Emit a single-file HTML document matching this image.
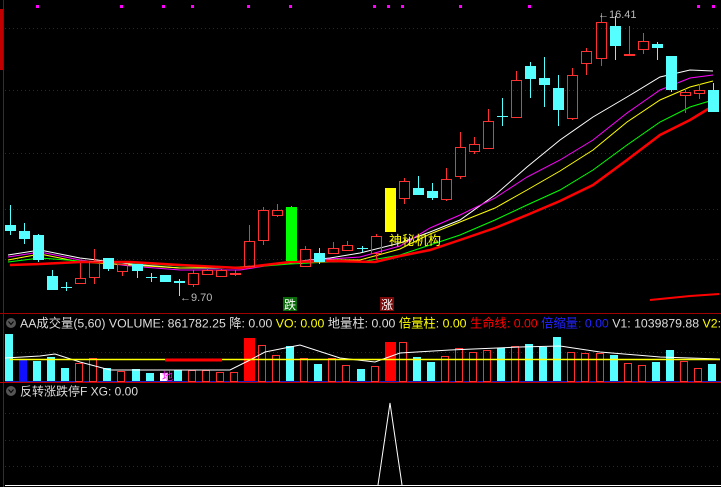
<!DOCTYPE html>
<html><head><meta charset="utf-8"><style>
body{margin:0;background:#000;width:721px;height:487px;overflow:hidden;font-family:"Liberation Sans","Noto Sans CJK SC",sans-serif}
svg{display:block}
</style></head><body>
<svg width="721" height="487" xmlns="http://www.w3.org/2000/svg" font-family="Liberation Sans, Noto Sans CJK SC, sans-serif">
<rect width="721" height="487" fill="#000"/>
<g stroke="#8a0000" stroke-dasharray="1,3" stroke-width="1">
<line x1="5" y1="28.5" x2="721" y2="28.5"/><line x1="5" y1="90.5" x2="721" y2="90.5"/>
<line x1="5" y1="153.5" x2="721" y2="153.5"/><line x1="5" y1="209.5" x2="721" y2="209.5"/>
<line x1="5" y1="259.5" x2="721" y2="259.5"/>
<line x1="5" y1="352.5" x2="721" y2="352.5"/>
<line x1="5" y1="413.5" x2="721" y2="413.5"/><line x1="5" y1="440.5" x2="721" y2="440.5"/><line x1="5" y1="466.5" x2="721" y2="466.5"/>
</g>
<line x1="3.5" y1="0" x2="3.5" y2="487" stroke="#a00000"/>
<rect x="0" y="9" width="3" height="61" fill="#c00000"/>
<line x1="0" y1="313.5" x2="721" y2="313.5" stroke="#a00000"/>
<line x1="0" y1="382.5" x2="721" y2="382.5" stroke="#c00000"/>
<line x1="5" y1="381.5" x2="721" y2="381.5" stroke="#2020c0"/>
<g fill="#f0f">
<rect x="36" y="5" width="3" height="3"/><rect x="120" y="5" width="3" height="3"/><rect x="162" y="5" width="3" height="3"/><rect x="191" y="5" width="3" height="3"/><rect x="247" y="5" width="3" height="3"/><rect x="289" y="5" width="3" height="3"/><rect x="373" y="5" width="3" height="3"/><rect x="387" y="5" width="3" height="3"/><rect x="401" y="5" width="3" height="3"/><rect x="459" y="5" width="3" height="3"/><rect x="528" y="5" width="3" height="3"/><rect x="697" y="5" width="3" height="3"/><rect x="712" y="5" width="3" height="3"/>
</g>
<g fill="none">
<polyline stroke="#fff" stroke-width="1" points="8,255 40,250 80,258 130,264 180,268 240,268 290,262 330,258 360,253 400,243 430,232 460,220 495,195 527,167 560,140 593,117 627,97 660,77 690,70 713,71"/>
<polyline stroke="#f0f" stroke-width="1" points="8,257 40,252 80,260 130,266 180,270 240,270 290,262 330,259 360,257 400,246 430,228 460,215 495,198 527,177 560,160 593,140 627,113 660,90 690,78 713,75"/>
<polyline stroke="#ff0" stroke-width="1" points="8,260 40,254 80,262 130,265 180,268 240,267 290,263 330,260 360,260 400,249 430,234 460,222 495,208 527,190 560,171 593,150 627,122 660,100 690,87 713,81"/>
<polyline stroke="#0f0" stroke-width="1" points="8,262 40,258 80,261 130,263 180,266 240,268 290,264 330,262 360,262 400,255 430,245 460,235 495,220 527,205 560,190 593,170 627,145 660,122 690,107 713,100"/>
<polyline stroke="#f00" stroke-width="2.5" points="10,265 40,264 80,262 130,262 180,265 240,268 290,262 330,261 375,262 400,256 430,250 460,240 495,228 527,215 560,201 593,185 627,160 660,135 690,120 713,106"/>
<polyline stroke="#f00" stroke-width="2" points="650,300 690,296 719,294"/>
</g>
<g id="c" stroke-width="1"></g>
<g id="v"></g>
<g fill="none">
<polyline stroke="#fff" points="5,358 40,356 55,354 80,362 110,370 230,370 250,360 265,352 300,345 340,358 375,362 400,353 450,350 520,347 560,346 600,352 660,357 720,359"/>
<line x1="10" y1="359.5" x2="720" y2="359.5" stroke="#ff0" stroke-width="1.5"/>
<line x1="165" y1="360" x2="222" y2="360" stroke="#f00" stroke-width="3"/>
</g>
<line x1="5" y1="485.5" x2="721" y2="485.5" stroke="#fff"/>
<polyline fill="none" stroke="#fff" points="378,485 390,403 402,485"/>
<text x="180" y="301" fill="#bbb" font-size="11">←9.70</text>
<text x="598" y="18" fill="#bbb" font-size="11">←16.41</text>
<text x="389" y="245" fill="#ff0" font-size="13">神秘机构</text>
<rect x="283" y="297" width="14" height="14" fill="#0a6a0a"/><text x="284" y="309" fill="#fff" font-size="12">跌</text>
<rect x="380" y="297" width="14" height="14" fill="#7a0a0a"/><text x="381" y="309" fill="#fff" font-size="12">涨</text>
<circle cx="11" cy="323" r="5" fill="#555"/><path d="M8.5,321.5 L11,324.5 L13.5,321.5" stroke="#000" fill="none"/>
<text x="20" y="327.5" font-size="12.3" fill="#ddd" textLength="701" lengthAdjust="spacingAndGlyphs">AA成交量(5,60) VOLUME: 861782.25 降: 0.00 <tspan fill="#ff0">VO: 0.00</tspan> 地量柱: 0.00 <tspan fill="#ff0">倍量柱: 0.00</tspan> <tspan fill="#f00">生命线: 0.00</tspan> <tspan fill="#22f">倍缩量: 0.00</tspan> V1: 1039879.88 <tspan fill="#ff0">V2:</tspan></text>
<circle cx="11" cy="391" r="5" fill="#555"/><path d="M8.5,389.5 L11,392.5 L13.5,389.5" stroke="#000" fill="none"/>
<text x="20" y="395.5" font-size="12" fill="#ddd">反转涨跌停F XG: 0.00</text>
<text x="162" y="380" font-size="11" fill="#f0f">地</text>
</svg>
<script>
var ns="http://www.w3.org/2000/svg";
function el(p,t,a){var e=document.createElementNS(ns,t);for(var k in a)e.setAttribute(k,a[k]);p.appendChild(e);return e;}
var C=[["c",225,231,205,235],["c",231,239,223,244],["c",235,260,234,262],["c",276,290,270,290],["c",287,287,282,291],["r",278,283,263,284],["r",261,277,249,284],["c",258,269,258,271],["r",264,271,264,276],["c",264,271,264,278],["c",277,277,273,282],["c",275,282,275,282],["c",281,283,279,296],["r",273,284,270,287],["r",270,274,268,275],["r",270,276,269,277],["r",273,273,270,276],["r",241,266,225,266],["r",210,240,207,245],["r",210,215,204,217],["g",207,261,206,261],["r",249,266,246,266],["c",253,262,248,264],["r",248,253,242,254],["r",245,250,241,250],["c",248,249,246,252],["r",236,253,234,260],["y",188,232,188,232],["r",181,198,178,204],["c",188,195,176,195],["c",191,198,183,200],["r",179,199,168,201],["r",147,176,132,179],["r",144,151,137,154],["r",121,148,109,148],["c",116,116,98,126],["r",80,117,71,117],["c",66,79,62,98],["c",78,85,57,107],["c",88,110,75,126],["r",75,118,68,120],["r",51,63,48,75],["r",22,58,13,66],["c",26,46,16,60],["r",54,55,26,56],["r",41,49,33,54],["c",44,48,42,60],["c",56,90,56,92],["r",92,95,88,113],["r",90,93,84,99],["c",90,112,83,112]];
var V=[["c",334],["b",359],["c",361],["c",357],["c",368],["r",363],["r",358],["c",368],["r",371],["c",369],["c",373],["w",373],["c",370],["r",370],["r",370],["r",372],["r",372],["R",338],["r",345],["r",355],["c",346],["r",358],["c",364],["r",358],["r",365],["c",369],["r",366],["R",342],["r",342],["c",357],["c",362],["r",356],["r",348],["r",352],["r",350],["c",348],["r",346],["c",344],["c",347],["c",337],["r",352],["r",353],["r",353],["c",355],["r",363],["r",365],["c",362],["c",350],["r",361],["r",368],["c",364]];
var col={c:"#55ffff",r:"#ff3030",g:"#00ff00",y:"#ffff00",b:"#1010ff",w:"#ffffff",R:"#ff0000"};
var cg=document.getElementById("c"),vg=document.getElementById("v");
C.forEach(function(d,i){var x=5+i*14.06,cl=col[d[0]],w=11,cx=Math.round(x+5)+0.5;
 if(d[0]=="r"){el(cg,"line",{x1:cx,x2:cx,y1:d[3],y2:d[1],stroke:cl});el(cg,"line",{x1:cx,x2:cx,y1:d[2],y2:d[4],stroke:cl});
  if(d[2]-d[1]<2)el(cg,"rect",{x:Math.round(x),y:d[1],width:w,height:2,fill:cl});
  else el(cg,"rect",{x:Math.round(x)+0.5,y:d[1]+0.5,width:w-1,height:d[2]-d[1],fill:"none",stroke:cl});}
 else{el(cg,"line",{x1:cx,x2:cx,y1:d[3],y2:d[4],stroke:cl});el(cg,"rect",{x:Math.round(x),y:d[1],width:w,height:Math.max(1,d[2]-d[1]),fill:cl});}
});
V.forEach(function(d,i){var x=Math.round(5+i*14.06),cl=col[d[0]];
 if(d[0]=="r")el(vg,"rect",{x:x+0.5,y:d[1]+0.5,width:7,height:381-d[1],fill:"none",stroke:cl});
 else if(d[0]=="R")el(vg,"rect",{x:x,y:d[1],width:11,height:381-d[1],fill:cl});
 else el(vg,"rect",{x:x,y:d[1],width:8,height:381-d[1],fill:cl});
});
</script>
</body></html>
